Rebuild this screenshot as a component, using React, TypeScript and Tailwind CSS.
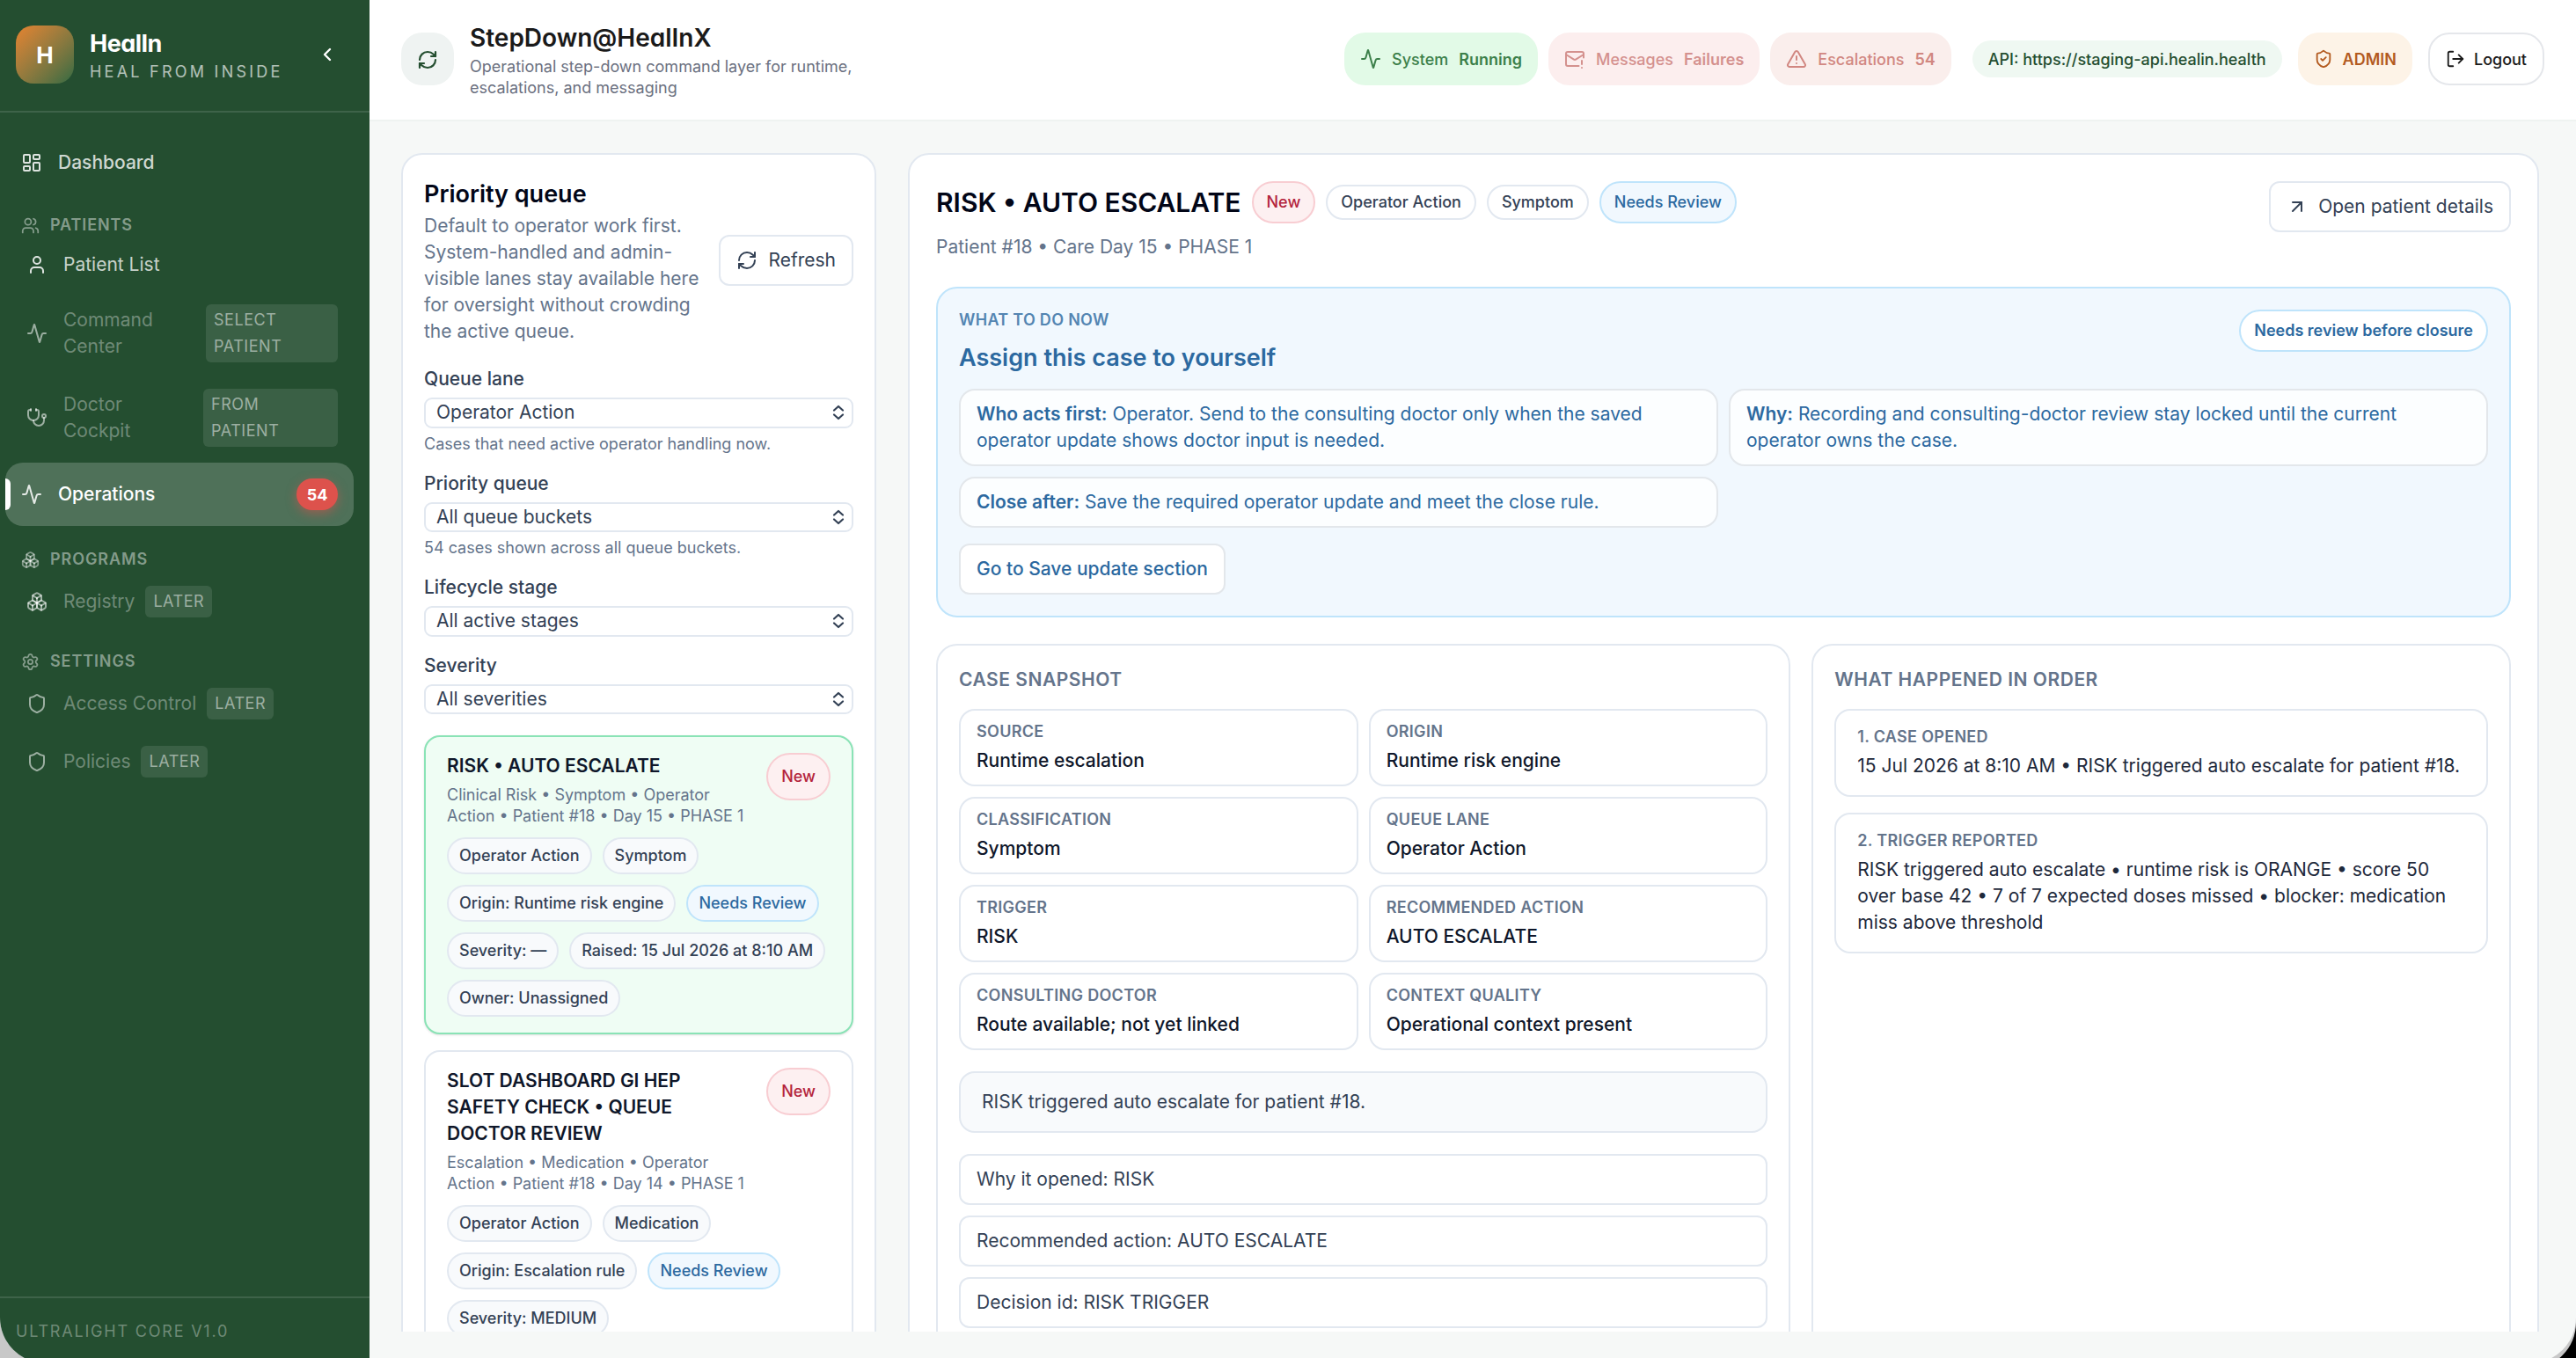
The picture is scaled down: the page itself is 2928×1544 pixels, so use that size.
import React from 'react';
import {
  Activity,
  ArrowUpRight,
  Boxes,
  ChevronLeft,
  LayoutDashboard,
  LogOut,
  LucideIcon,
  MailWarning,
  RefreshCw,
  Settings,
  Shield,
  ShieldCheck,
  Stethoscope,
  TriangleAlert,
  User,
  Users,
} from 'lucide-react';
import clsx from 'clsx';

type ChipTone = 'neutral' | 'plain' | 'info' | 'danger';

interface QueueCase {
  title: string;
  meta: string;
  active?: boolean;
  chips: { label: string; tone?: ChipTone }[];
}

const queueCases: QueueCase[] = [
  {
    title: 'RISK • AUTO ESCALATE',
    meta: 'Clinical Risk • Symptom • Operator Action • Patient #18 • Day 15 • PHASE 1',
    active: true,
    chips: [
      { label: 'Operator Action' },
      { label: 'Symptom' },
      { label: 'Origin: Runtime risk engine' },
      { label: 'Needs Review', tone: 'info' },
      { label: 'Severity: —' },
      { label: 'Raised: 15 Jul 2026 at 8:10 AM' },
      { label: 'Owner: Unassigned' },
    ],
  },
  {
    title: 'SLOT DASHBOARD GI HEP SAFETY CHECK • QUEUE DOCTOR REVIEW',
    meta: 'Escalation • Medication • Operator Action • Patient #18 • Day 14 • PHASE 1',
    chips: [
      { label: 'Operator Action' },
      { label: 'Medication' },
      { label: 'Origin: Escalation rule' },
      { label: 'Needs Review', tone: 'info' },
      { label: 'Severity: MEDIUM' },
    ],
  },
];

const filters = [
  { label: 'Queue lane', value: 'Operator Action', hint: 'Cases that need active operator handling now.' },
  { label: 'Priority queue', value: 'All queue buckets', hint: '54 cases shown across all queue buckets.' },
  { label: 'Lifecycle stage', value: 'All active stages' },
  { label: 'Severity', value: 'All severities' },
];

const snapshot = [
  ['SOURCE', 'Runtime escalation'],
  ['ORIGIN', 'Runtime risk engine'],
  ['CLASSIFICATION', 'Symptom'],
  ['QUEUE LANE', 'Operator Action'],
  ['TRIGGER', 'RISK'],
  ['RECOMMENDED ACTION', 'AUTO ESCALATE'],
  ['CONSULTING DOCTOR', 'Route available; not yet linked'],
  ['CONTEXT QUALITY', 'Operational context present'],
];

const facts = ['Why it opened: RISK', 'Recommended action: AUTO ESCALATE', 'Decision id: RISK TRIGGER'];

const timeline = [
  { label: '1. CASE OPENED', text: '15 Jul 2026 at 8:10 AM • RISK triggered auto escalate for patient #18.' },
  {
    label: '2. TRIGGER REPORTED',
    text: 'RISK triggered auto escalate • runtime risk is ORANGE • score 50 over base 42 • 7 of 7 expected doses missed • blocker: medication miss above threshold',
  },
];

const chipTones: Record<ChipTone, string> = {
  neutral: 'bg-[#f8fafc] border-[#e2e8f0] text-[#334155]',
  plain: 'bg-white border-[#e2e8f0] text-[#334155]',
  info: 'bg-[#f1f8fe] border-[#bfe4fb] text-[#2c69a0]',
  danger: 'bg-[#fdf0f1] border-[#f8cdd2] text-[#b4243c]',
};

function Chip({ label, tone = 'neutral', className }: { label: string; tone?: ChipTone; className: string }) {
  return (
    <span
      className={clsx(
        'inline-flex shrink-0 items-center rounded-[24px] border-2 text-[18px] leading-6 font-medium whitespace-nowrap',
        chipTones[tone],
        className,
      )}
    >
      {label}
    </span>
  );
}

function NavGroup({ icon: Icon, label }: { icon: LucideIcon; label: string }) {
  return (
    <div className="mt-[26px] mb-1.5 flex h-6 items-center gap-3 pl-[18px] text-white/45">
      <Icon className="h-[21px] w-[21px]" strokeWidth={2} />
      <span className="text-[18px] leading-6 font-semibold tracking-[0.05em]">{label}</span>
    </div>
  );
}

interface NavItemProps {
  icon: LucideIcon;
  label: string;
  badge?: string;
  badgeClass?: string;
  disabled?: boolean;
}

function NavItem({ icon: Icon, label, badge, badgeClass, disabled }: NavItemProps) {
  return (
    <div className="mr-3 mb-1.5 ml-1.5 flex items-center py-3 pr-[18px] pl-[18px]">
      <Icon className={clsx('mr-[18px] h-6 w-6 shrink-0', disabled ? 'text-white/55' : 'text-white/85')} />
      <span className={clsx('text-[21px] leading-[30px]', disabled ? 'text-white/35' : 'text-white/75', badgeClass && 'flex-1')}>
        {label}
      </span>
      {badge && (
        <span
          className={clsx(
            'ml-3 rounded-md bg-white/10 px-[9px] py-[3px] text-[18px] leading-[30px] tracking-[0.03em] text-white/50',
            badgeClass,
          )}
        >
          {badge}
        </span>
      )}
    </div>
  );
}

function Sidebar() {
  return (
    <aside className="flex h-[1544px] w-[420px] shrink-0 flex-col bg-[#244e30]">
      <div className="flex h-[128px] items-center border-b-2 border-white/12 pb-0.5 pl-[18px]">
        <div className="flex h-[66px] w-[66px] items-center justify-center rounded-[20px] bg-linear-135 from-[#e6832f] to-[#2f6a42] text-[26px] font-bold text-white">
          H
        </div>
        <div className="ml-[18px] flex-1">
          <div className="pt-0.5 text-[27px] leading-9 font-bold tracking-[-0.02em] text-white [font-feature-settings:'cv11']">HealIn</div>
          <div className="mt-0.5 text-[18px] leading-6 tracking-[0.18em] whitespace-nowrap text-white/65">HEAL FROM INSIDE</div>
        </div>
        <ChevronLeft className="mr-9 h-6 w-6 text-white" strokeWidth={2.4} />
      </div>

      <nav className="flex-1 px-1.5 pt-6">
        <div className="flex h-[66px] items-center pl-[18px]">
          <LayoutDashboard className="mr-[18px] h-6 w-6 text-white/85" />
          <span className="text-[21px] leading-[30px] font-medium text-white/78">Dashboard</span>
        </div>

        <NavGroup icon={Users} label="PATIENTS" />
        <NavItem icon={User} label="Patient List" />
        <NavItem icon={Activity} label="Command Center" badge="SELECT PATIENT" badgeClass="w-[150px]" disabled />
        <NavItem icon={Stethoscope} label="Doctor Cockpit" badge="FROM PATIENT" badgeClass="w-[153px]" disabled />

        <div className="relative mr-3 flex h-[72px] items-center rounded-[20px] bg-white/20 pr-[18px] pl-[18px]">
          <span className="absolute top-[18px] left-0 h-9 w-1.5 rounded-r-md bg-white" />
          <Activity className="mr-[18px] h-6 w-6 text-white/85" />
          <span className="flex-1 text-[21px] leading-[30px] font-medium text-white">Operations</span>
          <span className="flex h-9 w-[47px] items-center justify-center rounded-full bg-[#dd524c] text-[18px] font-bold text-white shadow-[0_4px_12px_rgba(221,82,76,0.5)]">
            54
          </span>
        </div>

        <NavGroup icon={Boxes} label="PROGRAMS" />
        <NavItem icon={Boxes} label="Registry" badge="LATER" disabled />
        <NavGroup icon={Settings} label="SETTINGS" />
        <NavItem icon={Shield} label="Access Control" badge="LATER" disabled />
        <NavItem icon={Shield} label="Policies" badge="LATER" disabled />
      </nav>

      <div className="h-[70px] border-t-2 border-white/12 pt-[26px] pl-[18px] text-[18px] leading-6 tracking-[0.1em] text-white/35">
        ULTRALIGHT CORE V1.0
      </div>
    </aside>
  );
}

function StatusPill({ icon: Icon, label, value, className }: { icon: LucideIcon; label: string; value: string; className: string }) {
  return (
    <div className={clsx('flex h-[60px] items-center gap-3 rounded-[24px] px-[18px] text-[18px] font-medium', className)}>
      <Icon className="h-6 w-6" strokeWidth={2} />
      <span>{label}</span>
      <span className="font-semibold">{value}</span>
    </div>
  );
}

function Header() {
  return (
    <header className="flex h-[138px] items-start border-b-2 border-[#eff3f1] bg-white px-9">
      <div className="mt-[37px] flex h-[60px] w-[60px] items-center justify-center rounded-[24px] bg-[#eff3f2] pt-0.5 text-[#244e30]">
        <RefreshCw className="h-6 w-6" strokeWidth={2.2} />
      </div>
      <div className="mt-[25px] ml-[18px] w-[460px]">
        <h1 className="text-[28px] leading-9 font-semibold text-[#1a1a1a] [font-feature-settings:'cv11']">StepDown@HealInX</h1>
        <p className="mt-[3px] text-[18px] leading-6 text-[#6b7080]">
          Operational step-down command layer for runtime, escalations, and messaging
        </p>
      </div>
      <div className="mt-[37px] ml-auto flex items-center whitespace-nowrap">
        <div className="mr-6 flex gap-3">
          <StatusPill icon={Activity} label="System" value="Running" className="bg-[#e2fae7] text-[#3c7f4a]" />
          <StatusPill icon={MailWarning} label="Messages" value="Failures" className="bg-[#fceeee] text-[#d4918e]" />
          <StatusPill icon={TriangleAlert} label="Escalations" value="54" className="bg-[#faeeec] text-[#d18781]" />
        </div>
        <div className="mr-[18px] flex h-[42px] items-center rounded-[21px] bg-[#eff8f2] px-[18px] text-[18px] font-medium text-[#244e30]">
          API: https://staging-api.healin.health
        </div>
        <div className="mr-[18px] flex h-[60px] items-center gap-[11px] rounded-[24px] bg-[#fdf3e7] px-[18px] text-[18px] font-semibold text-[#b35a1f]">
          <ShieldCheck className="h-[22px] w-[22px]" />
          ADMIN
        </div>
        <button className="flex h-[60px] items-center gap-2.5 rounded-[24px] border-2 border-[#e5e7eb] px-[18px] text-[18px] font-medium text-[#1a1a1a]">
          <LogOut className="h-[22px] w-[22px]" />
          Logout
        </button>
      </div>
    </header>
  );
}

function FilterSelect({ label, value, hint }: { label: string; value: string; hint?: string }) {
  return (
    <div>
      <div className="text-[21px] leading-[30px] font-medium text-[#334155]">{label}</div>
      <div className="mt-1.5 flex h-[34.5px] items-center justify-between rounded-[9px] border-2 border-[#e2e8f0] pr-2 pl-3 text-[21px] leading-[30px] text-[#334155]">
        <span>{value}</span>
        <svg viewBox="0 0 14 18" className="h-[18px] w-[14px]" fill="none" stroke="currentColor" strokeWidth="2.2" strokeLinecap="round" strokeLinejoin="round">
          <path d="M2 6.5 7 2l5 4.5M2 11.5 7 16l5-4.5" />
        </svg>
      </div>
      {hint && <div className="mt-1.5 text-[18px] leading-6 text-[#64748b]">{hint}</div>}
    </div>
  );
}

function QueueCard({ item }: { item: QueueCase }) {
  return (
    <div
      className={clsx(
        'rounded-[18px] border-2 px-6 py-[18px]',
        item.active ? 'border-[#8ae3b6] bg-[#effdf4] shadow-sm' : 'border-[#e2e8f0] bg-white',
      )}
    >
      <div className="flex items-start justify-between gap-[18px]">
        <div>
          <div className="text-[21px] leading-[30px] font-semibold text-[#0f172a]">{item.title}</div>
          <div className="mt-1.5 text-[18px] leading-6 text-[#64748b]">{item.meta}</div>
        </div>
        <Chip label="New" tone="danger" className="h-[54px] rounded-[27px] px-[15px]" />
      </div>
      <div className="mt-3 flex flex-wrap gap-3">
        {item.chips.map((chip) => (
          <Chip key={chip.label} label={chip.label} tone={chip.tone} className="h-[42px] px-3" />
        ))}
      </div>
    </div>
  );
}

function QueuePanel() {
  return (
    <section className="h-[1600px] w-[540px] shrink-0 rounded-[24px] border-2 border-[#e2e8f0] bg-white p-6">
      <div className="flex items-center gap-[18px]">
        <div className="flex-1">
          <h2 className="text-[27px] leading-[42px] font-semibold text-[#020617]">Priority queue</h2>
          <p className="text-[21px] leading-[30px] text-[#64748b]">
            Default to operator work first. System-handled and admin-visible lanes stay available here for oversight without crowding the active queue.
          </p>
        </div>
        <button className="flex h-[58px] items-center gap-3 rounded-xl border-2 border-[#e2e8f0] px-[18px] text-[21px] text-[#334155]">
          <RefreshCw className="h-6 w-6" />
          Refresh
        </button>
      </div>
      <div className="mt-6 flex flex-col gap-[18px]">
        {filters.map((filter) => (
          <FilterSelect key={filter.label} {...filter} />
        ))}
      </div>
      <div className="mt-6 flex flex-col gap-[18px]">
        {queueCases.map((item) => (
          <QueueCard key={item.title} item={item} />
        ))}
      </div>
    </section>
  );
}

function ActionNote({ title, children }: { title: string; children: React.ReactNode }) {
  return (
    <div className="rounded-[18px] border-2 border-[#e3e7eb] bg-white/80 px-[18px] py-3">
      <span className="font-semibold">{title}</span> {children}
    </div>
  );
}

function ActionPanel() {
  return (
    <div className="mt-[30px] rounded-[24px] border-2 border-[#bfe4fb] bg-[#f1f8fe] p-6 text-[21px] leading-[30px] text-[#2c69a0]">
      <div className="flex items-start justify-between">
        <div>
          <div className="text-[18px] leading-6 font-semibold tracking-[0.017em] opacity-80">WHAT TO DO NOW</div>
          <h3 className="mt-[10px] text-[27px] leading-[42px] font-semibold">Assign this case to yourself</h3>
        </div>
        <span className="flex h-12 items-center rounded-[24px] border-2 border-[#bfe4fb] bg-white px-[15px] text-[18px] font-semibold">
          Needs review before closure
        </span>
      </div>
      <div className="mt-[14px] grid grid-cols-2 gap-3">
        <ActionNote title="Who acts first:">
          Operator. Send to the consulting doctor only when the saved operator update shows doctor input is needed.
        </ActionNote>
        <ActionNote title="Why:">
          Recording and consulting-doctor review stay locked until the current operator owns the case.
        </ActionNote>
        <ActionNote title="Close after:">Save the required operator update and meet the close rule.</ActionNote>
      </div>
      <button className="mt-[18px] block h-[58px] rounded-xl border-2 border-[#e3e7eb] bg-white px-[18px] font-medium">
        Go to Save update section
      </button>
    </div>
  );
}

function DetailPanel() {
  return (
    <section className="h-[1600px] flex-1 rounded-[24px] border-2 border-[#e2e8f0] bg-white p-[30px]">
      <div className="flex items-start justify-between">
        <div>
          <div className="flex h-12 items-center gap-3">
            <h2 className="text-[30px] leading-[42px] font-semibold text-[#020617]">RISK • AUTO ESCALATE</h2>
            <Chip label="New" tone="danger" className="h-12 px-[15px]" />
            <Chip label="Operator Action" tone="plain" className="h-10 px-[15px]" />
            <Chip label="Symptom" tone="plain" className="h-10 px-[15px]" />
            <Chip label="Needs Review" tone="info" className="h-12 px-[15px]" />
          </div>
          <p className="mt-3 text-[21px] leading-[30px] text-[#64748b]">Patient #18 • Care Day 15 • PHASE 1</p>
        </div>
        <button className="flex h-[58px] items-center gap-3 rounded-xl border-2 border-[#e2e8f0] px-[18px] text-[21px] text-[#334155]">
          <ArrowUpRight className="h-6 w-6" />
          Open patient details
        </button>
      </div>

      <ActionPanel />

      <div className="mt-[30px] grid grid-cols-[1.1fr_0.9fr] gap-6">
        <div className="h-[900px] rounded-[24px] border-2 border-[#e2e8f0] p-6">
          <h3 className="text-[21px] leading-[30px] font-semibold tracking-[0.025em] text-[#64748b]">CASE SNAPSHOT</h3>
          <div className="mt-[18px] grid grid-cols-2 gap-3">
            {snapshot.map(([label, value]) => (
              <div key={label} className="rounded-[18px] border-2 border-[#e2e8f0] px-[18px] py-3">
                <div className="text-[18px] leading-6 font-semibold tracking-[0.017em] text-[#64748b]">{label}</div>
                <div className="mt-1.5 text-[21px] leading-[30px] font-medium text-[#0f172a]">{value}</div>
              </div>
            ))}
          </div>
          <div className="mt-6 rounded-[18px] border-2 border-[#e2e8f0] bg-[#f8fafc] px-6 py-[18px] text-[21px] leading-[30px] text-[#334155]">
            RISK triggered auto escalate for patient #18.
          </div>
          <div className="mt-6 flex flex-col gap-3">
            {facts.map((fact) => (
              <div key={fact} className="rounded-xl border-2 border-[#e2e8f0] px-[18px] py-3 text-[21px] leading-[30px] text-[#334155]">
                {fact}
              </div>
            ))}
          </div>
        </div>

        <div className="h-[900px] rounded-[24px] border-2 border-[#e2e8f0] p-6">
          <h3 className="text-[21px] leading-[30px] font-semibold tracking-[0.025em] text-[#64748b]">WHAT HAPPENED IN ORDER</h3>
          <div className="mt-[18px] flex flex-col gap-[18px]">
            {timeline.map((entry) => (
              <div key={entry.label} className="rounded-[18px] border-2 border-[#e2e8f0] px-6 py-[18px]">
                <div className="text-[18px] leading-6 font-semibold tracking-[0.017em] text-[#64748b]">{entry.label}</div>
                <div className="mt-1.5 text-[21px] leading-[30px] text-[#1e293b]">{entry.text}</div>
              </div>
            ))}
          </div>
        </div>
      </div>
    </section>
  );
}

export default function App() {
  return (
    <div className="h-[1544px] w-[2928px] overflow-hidden bg-linear-to-r from-[#c8c8c8] from-50% to-black to-50% font-['Inter',sans-serif]">
      <div className="flex h-[1550px] overflow-hidden rounded-b-[52px] bg-[#f6f8f7] shadow-[0_6px_0_#c8c8c8]">
        <Sidebar />
        <div className="flex min-w-0 flex-1 flex-col">
          <Header />
          <main className="mt-9 flex h-[1340px] gap-9 overflow-hidden pr-[42px] pl-9">
            <QueuePanel />
            <DetailPanel />
          </main>
        </div>
      </div>
    </div>
  );
}
